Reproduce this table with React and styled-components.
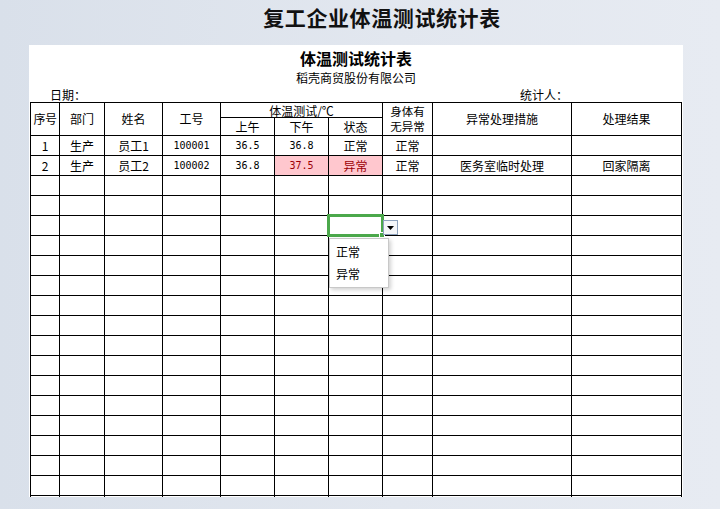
import styled, { createGlobalStyle } from "styled-components";

const GlobalStyle = createGlobalStyle`
  html, body {
    margin: 0;
    padding: 0;
  }
  body {
    width: 720px;
    height: 509px;
    overflow: hidden;
    background: linear-gradient(90deg, #d9e0ea 0%, #e2e7ef 55%, #e7ebf2 100%);
    font-family: "Noto Sans CJK SC", "Noto Sans", sans-serif;
    color: #000;
  }
`;

const columns = [29, 45, 58, 58, 54, 54, 54, 50, 139, 110];

const rows = [
  { no: "1", dept: "生产", name: "员工1", id: "100001", am: "36.5", pm: "36.8", state: "正常", body: "正常", action: "", result: "" },
  { no: "2", dept: "生产", name: "员工2", id: "100002", am: "36.8", pm: "37.5", state: "异常", body: "正常", action: "医务室临时处理", result: "回家隔离", alert: true },
];

const EMPTY_ROWS = 17;
const SELECTED_ROW = 4;

const App = () => {
  const allRows = [...rows];
  for (let i = 0; i < EMPTY_ROWS; i++) allRows.push(null);

  return (
    <>
      <GlobalStyle />
      <Page>
        <PageTitle>复工企业体温测试统计表</PageTitle>
        <Sheet>
          <SheetTitle>体温测试统计表</SheetTitle>
          <Company>稻壳商贸股份有限公司</Company>
          <InfoRow>
            <span>日期：</span>
            <span>统计人：</span>
          </InfoRow>
          <Grid>
            <colgroup>
              {columns.map((w, i) => (
                <col key={i} style={{ width: w }} />
              ))}
            </colgroup>
            <thead>
              <tr>
                <Head rowSpan={2} $tight>序号</Head>
                <Head rowSpan={2}>部门</Head>
                <Head rowSpan={2}>姓名</Head>
                <Head rowSpan={2}>工号</Head>
                <GroupHead colSpan={3}>体温测试/℃</GroupHead>
                <Head rowSpan={2} $twoLine>
                  <HeadLine>身体有</HeadLine>
                  <HeadLine>无异常</HeadLine>
                </Head>
                <Head rowSpan={2}>异常处理措施</Head>
                <Head rowSpan={2}>处理结果</Head>
              </tr>
              <tr>
                <SubHead>上午</SubHead>
                <SubHead>下午</SubHead>
                <SubHead>状态</SubHead>
              </tr>
            </thead>
            <tbody>
              {allRows.map((r, i) => (
                <tr key={i}>
                  <Cell>{r && r.no}</Cell>
                  <Cell>{r && r.dept}</Cell>
                  <Cell>{r && r.name}</Cell>
                  <Cell $mono>{r && r.id}</Cell>
                  <Cell $mono>{r && r.am}</Cell>
                  <Cell $mono $alert={r && r.alert}>{r && r.pm}</Cell>
                  <Cell $alert={r && r.alert}>
                    {r && r.state}
                    {i === SELECTED_ROW && (
                      <>
                        <Selection>
                          <Handle />
                        </Selection>
                        <DropButton>
                          <svg width="7" height="4" viewBox="0 0 7 4">
                            <path d="M0 0H7L3.5 4Z" fill="#000" />
                          </svg>
                        </DropButton>
                        <DropList>
                          <DropItem>正常</DropItem>
                          <DropItem>异常</DropItem>
                        </DropList>
                      </>
                    )}
                  </Cell>
                  <Cell>{r && r.body}</Cell>
                  <Cell>{r && r.action}</Cell>
                  <Cell>{r && r.result}</Cell>
                </tr>
              ))}
            </tbody>
          </Grid>
        </Sheet>
      </Page>
    </>
  );
};

const Page = styled.div`
  width: 720px;
  height: 509px;
  display: flex;
  flex-direction: column;
`;

const PageTitle = styled.h1`
  margin: 0;
  height: 45px;
  line-height: 34px;
  padding-left: 44px;
  text-align: center;
  font-size: 21px;
  font-weight: 700;
  letter-spacing: 0.6px;
  color: #111;
`;

const Sheet = styled.div`
  margin-left: 29px;
  width: 654px;
  height: 452px;
  background: #fff;
  overflow: hidden;
  display: flex;
  flex-direction: column;
`;

const SheetTitle = styled.div`
  padding-top: 3px;
  line-height: 20px;
  text-align: center;
  font-size: 16px;
  font-weight: 700;
`;

const Company = styled.div`
  line-height: 20px;
  text-align: center;
  font-size: 12px;
`;

const InfoRow = styled.div`
  display: flex;
  line-height: 14px;
  height: 14px;
  font-size: 12px;
  padding-left: 21px;
  gap: 434px;
`;

const Grid = styled.table`
  margin-left: 1px;
  border-collapse: collapse;
  table-layout: fixed;
  width: 652px;
  font-size: 12px;
  flex-shrink: 0;

  td,
  th {
    border: 1px solid #000;
    padding: 0;
    text-align: center;
    font-weight: 400;
    white-space: nowrap;
    overflow: visible;
  }
`;

const Head = styled.th`
  line-height: 16px;
  letter-spacing: ${(p) => (p.$tight ? "-0.5px" : "0")};
`;

const HeadLine = styled.div`
  height: 15px;
  line-height: 15px;
  font-size: 11.5px;
`;

const GroupHead = styled.th`
  height: 14px;
  line-height: 13px;
  vertical-align: bottom;
`;

const SubHead = styled.th`
  height: 17px;
  line-height: 16px;
`;

const Cell = styled.td`
  position: relative;
  height: 19px;
  line-height: 18px;
  font-family: ${(p) =>
    p.$mono ? '"DejaVu Sans Mono", "Liberation Mono", monospace' : 'inherit'};
  font-size: ${(p) => (p.$mono ? "10px" : "12px")};
  background: ${(p) => (p.$alert ? "#ffc7ce" : "transparent")};
  color: ${(p) => (p.$alert ? "#9c0006" : "#000")};
`;

const Selection = styled.div`
  position: absolute;
  top: -2px;
  left: -2px;
  right: -2px;
  bottom: -2px;
  border: 3px solid #4ba84b;
  pointer-events: none;
  z-index: 2;
`;

const Handle = styled.div`
  position: absolute;
  right: -4px;
  bottom: -4px;
  width: 4px;
  height: 4px;
  background: #4ba84b;
  border: 1px solid #fff;
`;

const DropButton = styled.div`
  position: absolute;
  top: 4px;
  left: calc(100% + 1px);
  width: 13px;
  height: 13px;
  border: 1px solid #8da2bd;
  background: #f4f6f9;
  display: flex;
  align-items: center;
  justify-content: center;
  z-index: 3;
`;

const DropList = styled.div`
  position: absolute;
  top: 22px;
  left: 0;
  width: 60px;
  height: 50px;
  background: #fff;
  border: 1px solid #c8c8c8;
  box-shadow: 2px 2px 4px rgba(0, 0, 0, 0.18);
  z-index: 4;
  display: flex;
  flex-direction: column;
  padding-top: 5px;
  box-sizing: border-box;
  text-align: left;
`;

const DropItem = styled.div`
  padding-left: 6px;
  height: 25px;
  line-height: 16px;
  font-size: 12px;
  color: #000;
`;

export default App;
